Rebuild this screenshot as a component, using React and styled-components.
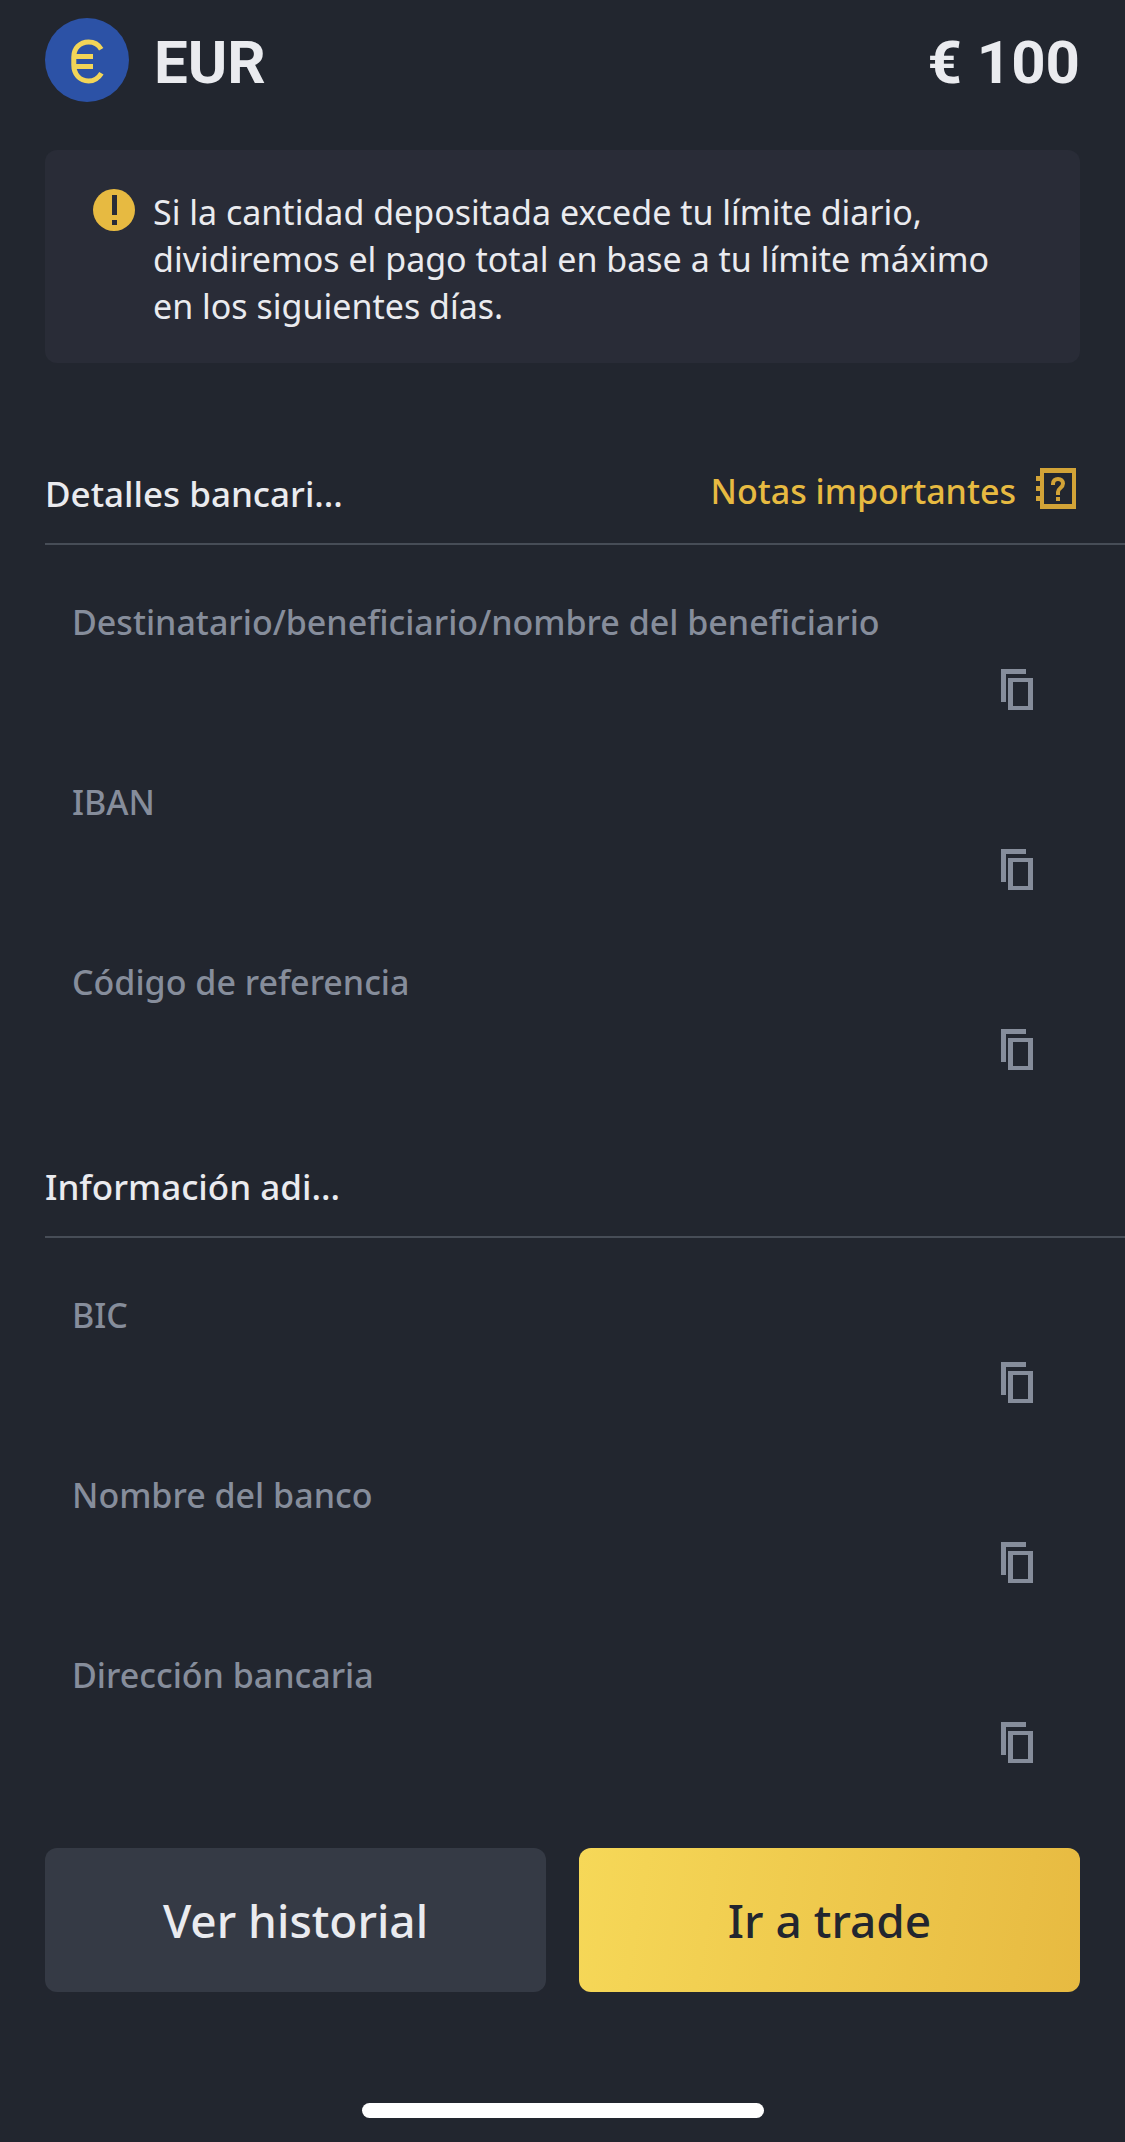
import React, { Component } from 'react';
import styled, { createGlobalStyle } from 'styled-components';

const bankDetails = [
    'Destinatario/beneficiario/nombre del beneficiario',
    'IBAN',
    'Código de referencia',
];

const extraInfo = ['BIC', 'Nombre del banco', 'Dirección bancaria'];

function EuroIcon() {
    return (
        <svg width="84" height="84" viewBox="0 0 84 84" aria-hidden="true">
            <circle cx="42" cy="42" r="42" fill="#2c52a6" />
            <g fill="none" stroke="#f2d558" strokeWidth="5">
                <path d="M56.2 31.2C53.4 26.4 49 24 43.6 24C34.6 24 28.8 30.6 28.8 39V47C28.8 56 34.6 63 43.6 63C49 63 53.4 60.2 56.4 55.2" />
                <path d="M29 38.4H48M29 48.6H48" />
            </g>
        </svg>
    );
}

function WarningIcon() {
    return (
        <svg width="42" height="42" viewBox="0 0 42 42" aria-hidden="true">
            <circle cx="21" cy="21" r="21" fill="#e7ba41" />
            <path d="M19 6h5v20h-5zM19 31h5v5h-5z" fill="#292c37" />
        </svg>
    );
}

function NotebookIcon() {
    return (
        <svg width="40" height="41" viewBox="0 0 40 41" aria-hidden="true">
            <path fill="#d2a337" fillRule="evenodd" d="M4 0h36v41H4zM8 5v31h28V5z" />
            <path fill="#d2a337" d="M0 8h4v5H0zM0 18h4v5H0zM0 28h4v5H0zM20 29h4v4h-4z" />
            <path fill="none" stroke="#d2a337" strokeWidth="4" d="M17 17V16C17 12.800 19 11 22 11C25 11 27 12.800 27 15.600C27 20 22 20 22 24V27" />
        </svg>
    );
}

function CopyIcon() {
    return (
        <svg width="32" height="41" viewBox="0 0 32 41" aria-hidden="true">
            <path fill="#868d9b" d="M0 0h25v5H5v28H0z" />
            <path fill="#868d9b" fillRule="evenodd" d="M7 9h25v32H7zM12 13v24h15V13z" />
        </svg>
    );
}

class FieldList extends Component {
    render() {
        return (
            <Fields>
                {this.props.items.map(item => (
                    <Field key={item}>
                        <FieldLabel>{item}</FieldLabel>
                        <CopyButton type="button" aria-label={item}>
                            <CopyIcon />
                        </CopyButton>
                    </Field>
                ))}
            </Fields>
        );
    }
}

export default class App extends Component {
    render() {
        return (
            <Page>
                <GlobalStyle />
                <Header>
                    <Currency>
                        <EuroIcon />
                        <HeaderText>EUR</HeaderText>
                    </Currency>
                    <HeaderText>€ 100</HeaderText>
                </Header>
                <Notice>
                    <WarningIcon />
                    <NoticeText>
                        Si la cantidad depositada excede tu límite diario, dividiremos el pago
                        total en base a tu límite máximo en los siguientes días.
                    </NoticeText>
                </Notice>
                <section>
                    <SectionHeader>
                        <SectionTitle>Detalles bancari...</SectionTitle>
                        <NotesLink href="#notas">
                            Notas importantes
                            <NotebookIcon />
                        </NotesLink>
                    </SectionHeader>
                    <FieldList items={bankDetails} />
                </section>
                <section>
                    <SectionHeader>
                        <SectionTitle>Información adi...</SectionTitle>
                    </SectionHeader>
                    <FieldList items={extraInfo} />
                </section>
                <Actions>
                    <ActionButton type="button">Ver historial</ActionButton>
                    <ActionButton type="button" $primary>Ir a trade</ActionButton>
                </Actions>
                <HomeBar />
            </Page>
        );
    }
}

const GlobalStyle = createGlobalStyle`
* {
    box-sizing: border-box;
}
body {
    margin: 0;
    background: #22262f;
}
svg {
    display: block;
    flex: none;
}
`

const Page = styled.main`
display: flex;
flex-direction: column;
min-height: 100vh;
padding: 18px 0 24px 45px;
color: #eaebef;
font-family: "Noto Sans", "Open Sans", sans-serif;
font-size: 34px;
line-height: 47px;
`

const Header = styled.header`
display: flex;
align-items: center;
justify-content: space-between;
margin-right: 45px;
`

const Currency = styled.div`
display: flex;
align-items: center;
gap: 25px;
`

const HeaderText = styled.span`
padding-top: 6px;
font-family: Roboto, sans-serif;
font-size: 60px;
font-weight: 700;
line-height: 60px;
`

const Notice = styled.div`
display: flex;
gap: 18px;
margin: 48px 45px 83px 0;
padding: 39px 48px 33px;
border-radius: 12px;
background: #292c37;
`

const NoticeText = styled.p`
margin: 0;
font-weight: 400;
`

const SectionHeader = styled.div`
display: flex;
align-items: flex-end;
justify-content: space-between;
height: 99px;
padding: 0 49px 26px 0;
border-bottom: 2px solid #474d57;
`

const SectionTitle = styled.h2`
margin: 0;
font-size: 35px;
font-weight: 500;
`

const NotesLink = styled.a`
display: flex;
align-items: flex-start;
gap: 20px;
padding-bottom: 2px;
color: #e7ba41;
font-weight: 500;
text-decoration: none;
`

const Fields = styled.div`
padding: 54px 92px 0 27px;
`

const Field = styled.div`
display: flex;
flex-direction: column;
height: 180px;
`

const FieldLabel = styled.span`
color: #868d9b;
font-weight: 500;
`

const CopyButton = styled.button`
align-self: flex-end;
margin: 23px 0 0;
padding: 0;
border: 0;
background: none;
cursor: pointer;
`

const Actions = styled.div`
display: grid;
grid-template-columns: 1fr 1fr;
gap: 33px;
margin: 16px 45px 0 0;
`

const ActionButton = styled.button`
height: 144px;
border: 0;
border-radius: 12px;
background: ${props => props.$primary ? 'linear-gradient(100deg, #f6d858, #e7ba41)' : '#353a45'};
color: ${props => props.$primary ? '#22262f' : '#eaebef'};
font-family: inherit;
font-size: 46px;
font-weight: 500;
cursor: pointer;
`

const HomeBar = styled.div`
align-self: center;
width: 402px;
height: 15px;
margin: auto 45px 0 0;
border-radius: 8px;
background: #fff;
`
